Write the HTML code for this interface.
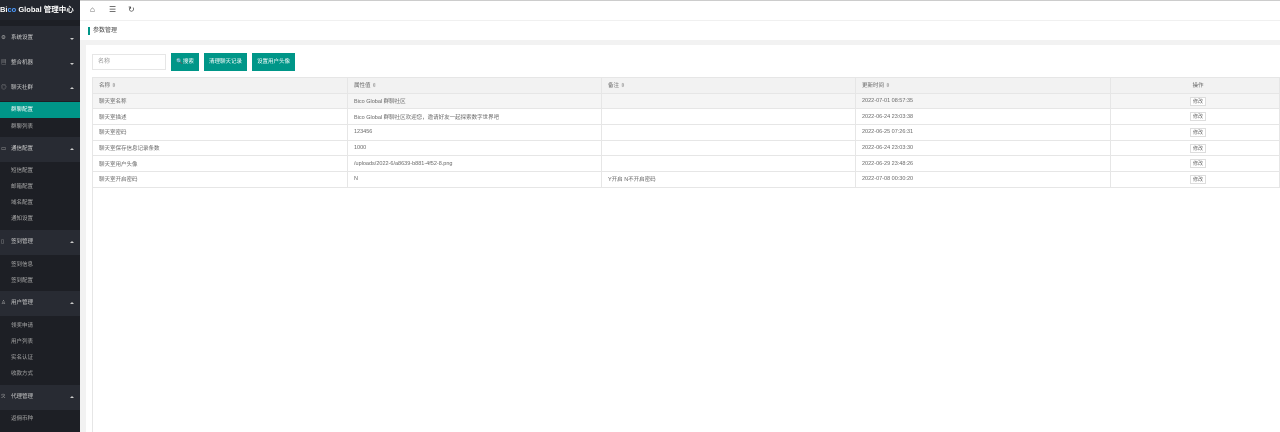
<!DOCTYPE html>
<html><head><meta charset="utf-8"><style>
*{margin:0;padding:0;box-sizing:border-box}
body{width:1280px;height:432px;overflow:hidden;font-family:"Liberation Sans","Noto Sans CJK SC",sans-serif;font-size:6px;color:#666;background:#f2f2f2;position:relative}
.side{position:absolute;left:0;top:0;width:80px;height:432px;background:#1d1f25}
.logo{height:20px;background:#23262e;color:#fff;font-size:7.5px;font-weight:bold;line-height:20px;white-space:nowrap;padding-left:0}
.logo b{color:#4c9bff;font-weight:bold}
.p{position:absolute;left:0;width:80px;height:25px;background:#282b33;color:#ccc;line-height:25px;padding-left:11px;font-size:5.5px}
.p i{position:absolute;left:1px;font-style:normal;color:#aaa}
.p:after{content:"";position:absolute;right:6px;top:11px;border:2.5px solid transparent}
.dn:after{border-top-color:#ccc;top:12px}
.up:after{border-bottom-color:#ccc;top:9px}
.s{position:absolute;left:0;width:80px;height:16px;line-height:16px;padding-left:11px;color:#aaa;font-size:5.5px}
.act{background:#009688;color:#fff}
.top{position:absolute;left:80px;top:0;right:0;height:20px;background:#fff;border-top:1px solid #ccc}
.top span{position:absolute;top:4px;font-size:8px;color:#444}
.bc{position:absolute;left:80px;top:20px;right:0;height:20px;background:#fff;border-top:1px solid #f0f0f0}
.bc span{position:absolute;left:8px;top:6px;border-left:2px solid #009688;padding-left:3px;height:8px;line-height:8px;color:#444}
.card{position:absolute;left:86px;top:45px;right:0;bottom:0;background:#fff}
.inp{position:absolute;left:92px;top:54px;width:74px;height:16px;border:1px solid #e6e6e6;padding-left:5px;line-height:14px;color:#999}
.btn{position:absolute;top:53px;height:18px;background:#009688;color:#fff;line-height:18px;text-align:center;font-size:5.5px}
table{position:absolute;left:92px;top:77px;width:1188px;border-collapse:collapse}
td,th{height:15.7px;border:1px solid #e6e6e6;padding-left:6px;font-weight:normal;text-align:left;font-size:5.5px;color:#666;vertical-align:middle}
th{background:#f2f2f2}
tr.g td{background:#f5f5f5}
.e{display:inline-block;border:1px solid #ddd;padding:0 2px;height:9px;line-height:8px;font-size:5px;background:#fff}
.rest{position:absolute;left:92px;top:188px;width:1px;bottom:0;background:#e6e6e6}
</style></head><body>
<div class="side">
<div class="logo">Bi<b>co</b> Global 管理中心</div>
<div class="p dn" style="top:26px"><i>⚙</i>系统设置</div>
<div class="p dn" style="top:51px"><i>▤</i>整合机器</div>
<div class="p up" style="top:76px"><i>◎</i>聊天社群</div>
<div class="s act" style="top:102px">群聊配置</div>
<div class="s" style="top:119px">群聊列表</div>
<div class="p up" style="top:137px"><i>▭</i>通信配置</div>
<div class="s" style="top:163px">短信配置</div>
<div class="s" style="top:179px">邮箱配置</div>
<div class="s" style="top:195px">域名配置</div>
<div class="s" style="top:211px">通知设置</div>
<div class="p up" style="top:230px"><i>▯</i>签到管理</div>
<div class="s" style="top:257px">签到信息</div>
<div class="s" style="top:273px">签到配置</div>
<div class="p up" style="top:291px"><i>♙</i>用户管理</div>
<div class="s" style="top:318px">领奖申请</div>
<div class="s" style="top:334px">用户列表</div>
<div class="s" style="top:350px">实名认证</div>
<div class="s" style="top:366px">收款方式</div>
<div class="p up" style="top:385px"><i>ℛ</i>代理管理</div>
<div class="s" style="top:411px">返佣币种</div>
</div>
<div class="top"><span style="left:10px">⌂</span><span style="left:29px">☰</span><span style="left:48px">↻</span></div>
<div class="bc"><span>参数管理</span></div>
<div class="card"></div>
<div class="inp">名称</div>
<div class="btn" style="left:171px;width:28px">🔍搜索</div>
<div class="btn" style="left:204px;width:43px">清理聊天记录</div>
<div class="btn" style="left:252px;width:43px">设置用户头像</div>
<table>
<tr><th style="width:255px">名称 ⇳</th><th style="width:254px">属性值 ⇳</th><th style="width:254px">备注 ⇳</th><th style="width:255px">更新时间 ⇳</th><th style="text-align:center">操作</th></tr>
<tr class="g"><td>聊天室名称</td><td>Bico Global 群聊社区</td><td></td><td>2022-07-01 08:57:35</td><td style="text-align:center"><span class="e">修改</span></td></tr>
<tr><td>聊天室描述</td><td>Bico Global 群聊社区欢迎您，邀请好友一起探索数字世界吧</td><td></td><td>2022-06-24 23:03:38</td><td style="text-align:center"><span class="e">修改</span></td></tr>
<tr><td>聊天室密码</td><td>123456</td><td></td><td>2022-06-25 07:26:31</td><td style="text-align:center"><span class="e">修改</span></td></tr>
<tr><td>聊天室保存信息记录条数</td><td>1000</td><td></td><td>2022-06-24 23:03:30</td><td style="text-align:center"><span class="e">修改</span></td></tr>
<tr><td>聊天室用户头像</td><td>/uploads/2022-6/a8639-b881-4f52-8.png</td><td></td><td>2022-06-29 23:48:26</td><td style="text-align:center"><span class="e">修改</span></td></tr>
<tr><td>聊天室开启密码</td><td>N</td><td>Y开启 N不开启密码</td><td>2022-07-08 00:30:20</td><td style="text-align:center"><span class="e">修改</span></td></tr>
</table>
<div class="rest"></div>
</body></html>
